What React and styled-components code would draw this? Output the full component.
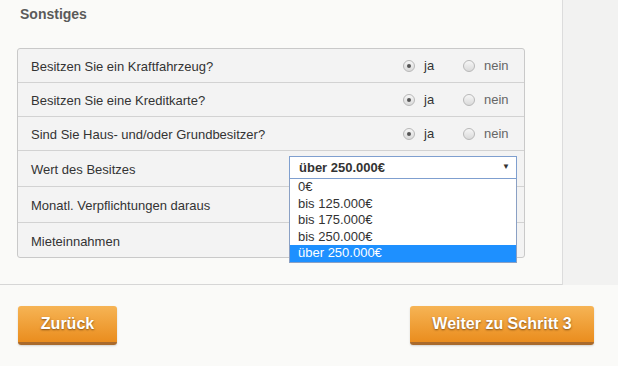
import React, { useState } from 'react';
import styled, { createGlobalStyle } from 'styled-components';

const GlobalStyle = createGlobalStyle`
  html, body {
    margin: 0;
    padding: 0;
    background: #fafaf8;
    font-family: "Liberation Sans", Arial, sans-serif;
  }
`;

const Page = styled.div`
  width: 618px;
  height: 366px;
  background: #fafaf8;
  overflow: hidden;
`;

const Top = styled.div`
  display: flex;
  height: 285px;
`;

const Main = styled.div`
  width: 562px;
  box-sizing: border-box;
  padding: 0 37px 0 17px;
  border-bottom: 1px solid #d6d6d6;
`;

const Sidebar = styled.div`
  flex: 1;
  background: #f2f2f1;
  border-left: 1px solid #dcdcdc;
`;

const Title = styled.h2`
  margin: 0;
  padding: 6px 0 0 3px;
  height: 48px;
  box-sizing: border-box;
  font-size: 14px;
  font-weight: bold;
  color: #5a5a5a;
`;

const Table = styled.div`
  border: 1px solid #c9c9c9;
  border-radius: 3px;
  background: #f3f3f3;
`;

const Row = styled.div`
  display: flex;
  align-items: center;
  box-sizing: border-box;
  height: ${p => p.$h}px;
  padding: 0 7px 0 13px;
  border-top: ${p => (p.$first ? 'none' : '1px solid #d2d2d2')};
  font-size: 13px;
  color: #333;
`;

const Label = styled.div`
  flex: 1;
  padding-top: 2px;
`;

const RadioGroup = styled.div`
  display: flex;
  align-items: center;
  padding-right: 9px;
`;

const RadioOption = styled.label`
  display: flex;
  align-items: center;
  gap: 9px;
  width: ${p => p.$w}px;
  font-size: 13px;
  color: ${p => (p.$checked ? '#333' : '#666')};
  cursor: pointer;
`;

const Circle = styled.span`
  position: relative;
  flex: none;
  width: 12px;
  height: 12px;
  border-radius: 50%;
  border: 1px solid #b8b8b8;
  background: linear-gradient(#f6f6f6, #dadada);
  box-sizing: border-box;
  &::after {
    content: '';
    display: ${p => (p.$checked ? 'block' : 'none')};
    position: absolute;
    left: 3px;
    top: 3px;
    width: 4px;
    height: 4px;
    border-radius: 50%;
    background: #555;
  }
`;

const SelectWrap = styled.div`
  position: relative;
  width: 228px;
  align-self: flex-start;
  margin-top: 5px;
`;

const SelectBox = styled.div`
  display: flex;
  align-items: center;
  justify-content: space-between;
  height: 23px;
  box-sizing: border-box;
  padding: 0 6px 0 9px;
  border: 1px solid #7f9fcf;
  background: #fff;
  font-size: 13px;
  font-weight: bold;
  color: #333;
`;

const Arrow = styled.span`
  font-size: 8px;
  color: #333;
  margin-bottom: 2px;
`;

const List = styled.ul`
  position: absolute;
  left: 0;
  top: 23px;
  width: 228px;
  box-sizing: border-box;
  margin: 0;
  padding: 0;
  list-style: none;
  background: #fff;
  border: 1px solid #8aa0c4;
  border-top: none;
  z-index: 5;
`;

const Option = styled.li`
  height: 16.5px;
  line-height: 16.5px;
  padding-left: 8px;
  font-size: 13px;
  color: ${p => (p.$active ? '#fff' : '#333')};
  background: ${p => (p.$active ? '#1e90ff' : 'transparent')};
`;

const Footer = styled.div`
  display: flex;
  justify-content: space-between;
  padding: 21px 24px 0 18px;
`;

const Button = styled.button`
  width: ${p => p.$w}px;
  height: 39px;
  box-sizing: border-box;
  border: none;
  border-bottom: 3px solid #a96a2c;
  border-radius: 3px;
  background: linear-gradient(#f6b455, #ea8d1e);
  color: #fff;
  font-family: "Liberation Sans", Arial, sans-serif;
  font-size: 16px;
  font-weight: bold;
  text-shadow: 0 1px 2px rgba(90, 50, 10, 0.75);
  box-shadow: 0 1px 2px rgba(0, 0, 0, 0.15);
  cursor: pointer;
`;

const questions = [
  'Besitzen Sie ein Kraftfahrzeug?',
  'Besitzen Sie eine Kreditkarte?',
  'Sind Sie Haus- und/oder Grundbesitzer?',
];

const options = ['0€', 'bis 125.000€', 'bis 175.000€', 'bis 250.000€', 'über 250.000€'];

function YesNo() {
  const [val, setVal] = useState('ja');
  return (
    <RadioGroup>
      <RadioOption $w={60} $checked={val === 'ja'} onClick={() => setVal('ja')}>
        <Circle $checked={val === 'ja'} />
        ja
      </RadioOption>
      <RadioOption $w={45} $checked={val === 'nein'} onClick={() => setVal('nein')}>
        <Circle $checked={val === 'nein'} />
        nein
      </RadioOption>
    </RadioGroup>
  );
}

export default function App() {
  const [value, setValue] = useState('über 250.000€');
  return (
    <Page>
      <GlobalStyle />
      <Top>
        <Main>
          <Title>Sonstiges</Title>
          <Table>
            {questions.map((q, i) => (
              <Row key={q} $h={i === 0 ? 33 : 34} $first={i === 0}>
                <Label>{q}</Label>
                <YesNo />
              </Row>
            ))}
            <Row $h={36}>
              <Label>Wert des Besitzes</Label>
              <SelectWrap>
                <SelectBox>
                  {value}
                  <Arrow>▼</Arrow>
                </SelectBox>
                <List>
                  {options.map(o => (
                    <Option key={o} $active={o === value} onClick={() => setValue(o)}>
                      {o}
                    </Option>
                  ))}
                </List>
              </SelectWrap>
            </Row>
            <Row $h={36}>
              <Label>Monatl. Verpflichtungen daraus</Label>
            </Row>
            <Row $h={35}>
              <Label>Mieteinnahmen</Label>
            </Row>
          </Table>
        </Main>
        <Sidebar />
      </Top>
      <Footer>
        <Button $w={99}>Zurück</Button>
        <Button $w={184}>Weiter zu Schritt 3</Button>
      </Footer>
    </Page>
  );
}
